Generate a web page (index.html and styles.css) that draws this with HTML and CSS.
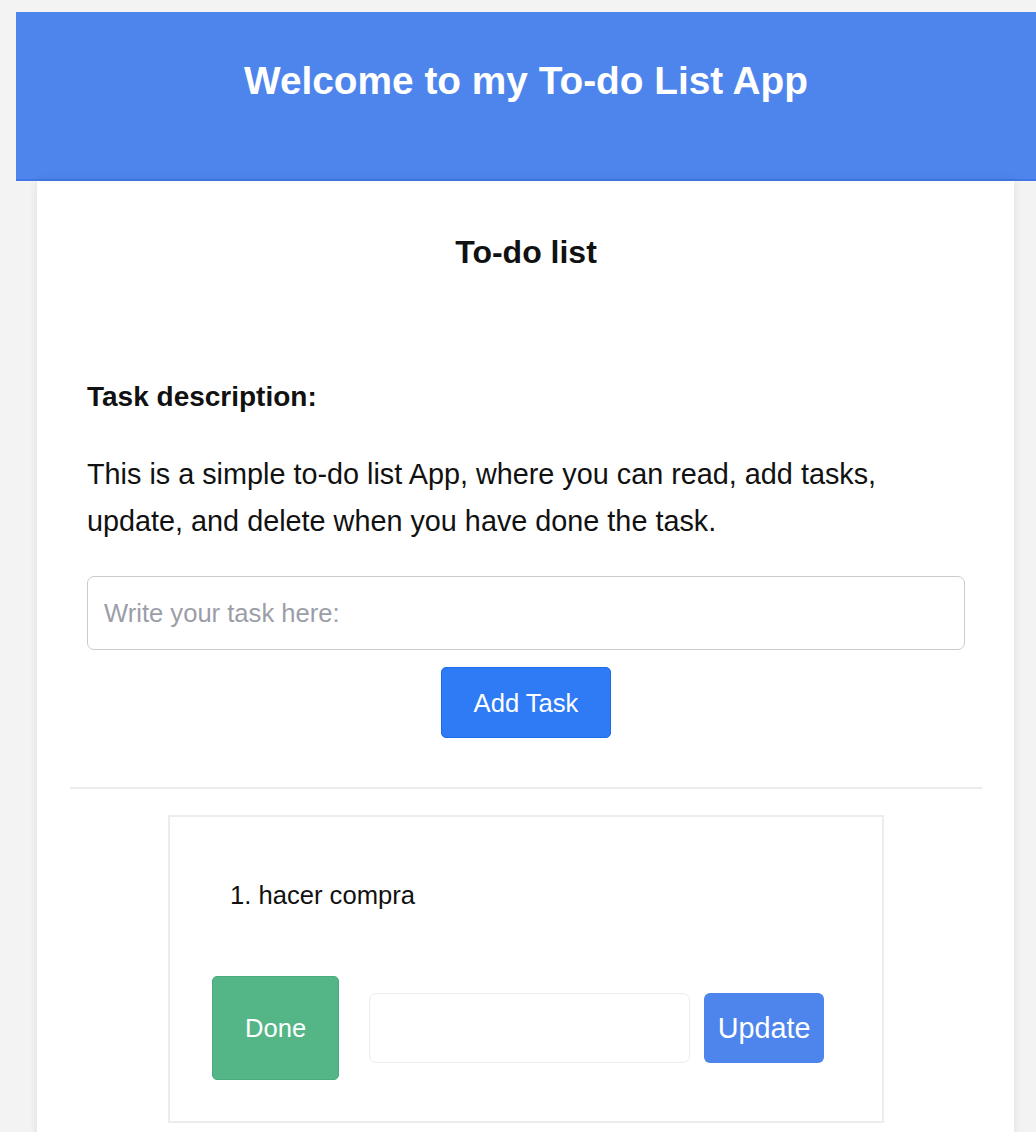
FILE: index.html
```html
<!DOCTYPE html>
<html lang="en">
<head>
<meta charset="utf-8">
<title>To-do List App</title>
<link rel="stylesheet" href="styles.css">
</head>
<body>
  <header class="app-header">
    <h1 class="app-title">Welcome to my To-do List App</h1>
  </header>
  <main class="card">
    <h2 class="list-title">To-do list</h2>
    <section class="task-form">
      <h3 class="form-title">Task description:</h3>
      <p class="form-text">This is a simple to-do list App, where you can read, add tasks, update, and delete when you have done the task.</p>
      <input class="task-input" type="text" placeholder="Write your task here:">
      <div class="add-row">
        <button class="btn btn-add" type="button">Add Task</button>
      </div>
    </section>
    <hr class="divider">
    <div class="task-card">
      <ol class="task-list">
        <li class="task-item">hacer compra</li>
      </ol>
      <div class="task-actions">
        <button class="btn btn-done" type="button">Done</button>
        <input class="update-input" type="text">
        <button class="btn btn-update" type="button">Update</button>
      </div>
    </div>
  </main>
</body>
</html>
```

FILE: styles.css
```css
* {
  box-sizing: border-box;
}

html, body {
  height: 100%;
}

body {
  margin: 0;
  padding: 12px 0 0 16px;
  background: #f3f3f3;
  font-family: "Liberation Sans", Arial, Helvetica, sans-serif;
  color: #111;
  overflow: hidden;
}

.app-header {
  background: #4d85ec;
  border-bottom: 2px solid #3d78e6;
  padding: 47px 0 76px;
  text-align: center;
}

.app-title {
  margin: 0;
  font-size: 38.8px;
  line-height: 44px;
  font-weight: bold;
  color: #fff;
}

.card {
  background: #fff;
  margin: 0 22px 0 21px;
  padding: 53px 32px 60px 33px;
  min-height: 1000px;
  box-shadow: 0 0 9px rgba(0, 0, 0, 0.09);
}

.list-title {
  margin: 0;
  text-align: center;
  font-size: 32px;
  line-height: 37px;
  font-weight: bold;
}

.task-form {
  padding: 0 17px;
}

.form-title {
  margin: 110px 0 0;
  font-size: 28px;
  line-height: 32px;
  font-weight: bold;
}

.form-text {
  margin: 38px 0 0;
  font-size: 28.8px;
  line-height: 47px;
}

.task-input {
  display: block;
  width: 100%;
  height: 74px;
  margin-top: 31px;
  padding: 0 16px;
  border: 1.5px solid #cbcbcb;
  border-radius: 7px;
  font-family: inherit;
  font-size: 25.6px;
  color: #111;
  outline: none;
}

.task-input::placeholder {
  color: #9b9ea8;
}

.add-row {
  display: flex;
  justify-content: center;
  margin-top: 17px;
}

.btn {
  font-family: inherit;
  color: #fff;
  border: none;
  cursor: pointer;
}

.btn-add {
  background: #2f7bf5;
  border: 1px solid #1f6ae6;
  border-radius: 5px;
  font-size: 25.6px;
  line-height: 30px;
  padding: 19.5px 32px;
}

.divider {
  margin: 49px 0 0;
  border: none;
  border-top: 2px solid #ebebeb;
  height: 0;
}

.task-card {
  width: 716px;
  margin: 26px auto 0;
  border: 2px solid #ececec;
  padding: 63px 42px 41px;
}

.task-list {
  margin: 0;
  padding: 0 0 0 18px;
  list-style-position: inside;
}

.task-item {
  font-size: 25.6px;
  line-height: 30px;
}

.task-actions {
  display: flex;
  align-items: center;
  margin-top: 66px;
}

.btn-done {
  background: #54b687;
  border: 1px solid #4aac7d;
  border-radius: 5px;
  font-size: 25.6px;
  line-height: 30px;
  padding: 36px 32px;
}

.update-input {
  width: 321px;
  height: 70px;
  margin-left: 30px;
  border: 1.5px solid #ececec;
  border-radius: 7px;
  font-family: inherit;
  font-size: 25.6px;
  padding: 0 12px;
  outline: none;
}

.btn-update {
  margin-left: 14px;
  background: #4d85ec;
  border-radius: 6px;
  font-size: 28.8px;
  line-height: 32px;
  padding: 19px 13.5px;
}
```
